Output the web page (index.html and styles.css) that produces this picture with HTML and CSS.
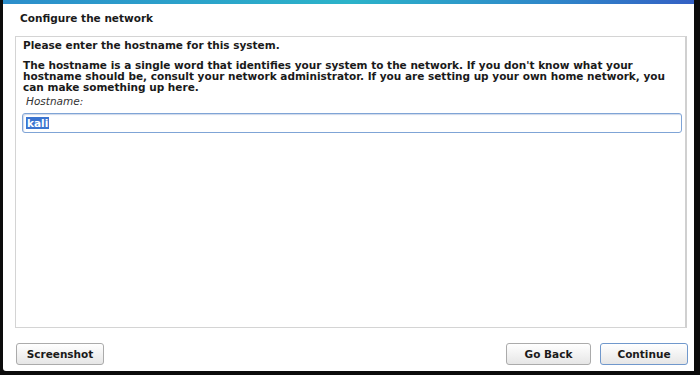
FILE: index.html
```html
<!DOCTYPE html>
<html lang="en">
<head>
    <meta charset="utf-8"/>
    <title>Configure the network</title>
    <link rel="stylesheet" href="styles.css">
</head>
<body>
    <div class="window">
        <div class="topbar"></div>
        <h1 class="title">Configure the network</h1>
        <div class="panel">
            <p class="lead">Please enter the hostname for this system.</p>
            <p class="desc">The hostname is a single word that identifies your system to the network. If you don't know what your hostname should be, consult your network administrator. If you are setting up your own home network, you can make something up here.</p>
            <label class="field-label" for="hostname">Hostname:</label>
            <div class="input" id="hostname"><span class="selected">kali</span></div>
        </div>
        <div class="buttons">
            <button class="btn">Screenshot</button>
            <span class="spacer"></span>
            <button class="btn back">Go Back</button>
            <button class="btn default">Continue</button>
        </div>
    </div>
</body>
</html>
```

FILE: styles.css
```css
html, body {
    margin: 0;
    height: 100%;
}
body {
    background: #0c0c0c;
    font-family: "DejaVu Sans", Verdana, sans-serif;
    font-size: 10.5px;
    color: #1a1a1a;
}
.window {
    margin-left: 3px;
    width: 691px;
    height: 371px;
    background: #ffffff;
    display: flex;
    flex-direction: column;
    box-sizing: border-box;
    border-bottom-left-radius: 3px;
}
.topbar {
    height: 4px;
    background: linear-gradient(to right, #2c8ecb, #2bb3c9 50%, #2f86c9 80%, #3460c4);
}
.title {
    font-size: 10.5px;
    font-weight: bold;
    margin: 8px 0 0 17px;
    line-height: 12px;
    height: 24px;
}
.panel {
    margin-left: 12px;
    width: 672px;
    height: 292px;
    box-sizing: border-box;
    border: 1px solid #d4d4d4;
    border-right: 2px solid #d0d0d0;
    padding: 2px 6px 0 7px;
}
.lead {
    font-weight: bold;
    margin: 0;
    line-height: 12px;
}
.desc {
    font-weight: bold;
    margin: 9px 0 0 0;
    line-height: 11px;
}
.field-label {
    display: block;
    font-style: italic;
    color: #333;
    margin: 2px 0 0 3px;
    line-height: 12px;
}
.input {
    margin: 6px 0 0 -1px;
    height: 20px;
    box-sizing: border-box;
    border: 1px solid #7fa4d6;
    border-radius: 3px;
    box-shadow: inset 1px 1px 1px rgba(60, 100, 170, 0.25);
    padding: 3px 3px;
    line-height: 12px;
    width: 660px;
}
.selected {
    background: #3b74d0;
    color: #ffffff;
    font-weight: bold;
    padding: 0 1px;
}
.buttons {
    display: flex;
    gap: 9px;
    margin: 15px 6px 0 13px;
}
.spacer {
    flex: 1;
}
.btn {
    font-family: "DejaVu Sans", Verdana, sans-serif;
    font-size: 10.5px;
    font-weight: bold;
    color: #1a1a1a;
    height: 22px;
    width: 88px;
    border: 1px solid #ababab;
    border-radius: 3px;
    background: linear-gradient(#ffffff, #e6e6e6);
    padding: 0;
}
.btn.back {
    width: 85px;
}
.btn.default {
    border-color: #7098cc;
}
```
